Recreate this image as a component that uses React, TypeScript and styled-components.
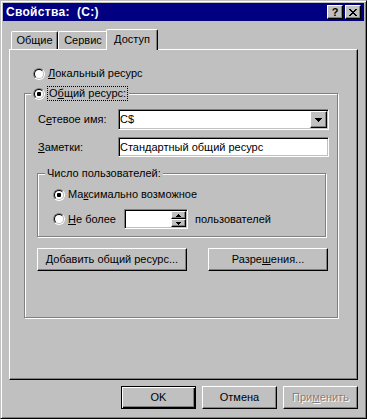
import styled, { createGlobalStyle, css } from "styled-components";

const GlobalStyle = createGlobalStyle`
  html, body {
    margin: 0;
    padding: 0;
    background: #c0c0c0;
  }
  body {
    font-family: "Liberation Sans", Arial, sans-serif;
    font-size: 11px;
    color: #000;
  }
  u {
    text-underline-offset: 1px;
  }
`;

const raised = css`
  border: 1px solid;
  border-color: #fff #000 #000 #fff;
  box-shadow: inset -1px -1px #808080;
`;

const sunken = css`
  border: 1px solid;
  border-color: #808080 #fff #fff #808080;
  box-shadow: inset 1px 1px #000, inset -1px -1px #c0c0c0;
`;

const etched = css`
  border: 1px solid #808080;
  box-shadow: inset 1px 1px #fff, 1px 1px #fff;
`;

const Window = styled.div`
  box-sizing: border-box;
  width: 367px;
  height: 419px;
  background: #c0c0c0;
  border: 1px solid;
  border-color: #c0c0c0 #000 #000 #c0c0c0;
  box-shadow: inset 1px 1px #fff, inset -1px -1px #808080;
  padding: 2px;
  display: flex;
  flex-direction: column;
`;

const TitleBar = styled.div`
  height: 18px;
  background: #000080;
  display: flex;
  align-items: center;
  gap: 2px;
  padding: 0 3px 0 3px;
`;

const TitleText = styled.div`
  flex: 1;
  color: #fff;
  font-weight: bold;
  font-size: 12px;
  letter-spacing: 0.3px;
  white-space: pre;
  line-height: 14px;
`;

const CaptionButton = styled.div`
  box-sizing: border-box;
  width: 16px;
  height: 14px;
  background: #c0c0c0;
  ${raised}
  display: flex;
  align-items: center;
  justify-content: center;
  font-weight: bold;
  font-size: 11px;
  line-height: 11px;
`;

const Client = styled.div`
  flex: 1;
  display: flex;
  flex-direction: column;
  padding: 8px 6px 0 6px;
`;

const TabRow = styled.div`
  display: flex;
  align-items: flex-end;
  height: 20px;
  padding-left: 2px;
`;

const Tab = styled.div<{ $w: number; $active?: boolean }>`
  box-sizing: border-box;
  width: ${(p) => p.$w}px;
  height: ${(p) => (p.$active ? 21 : 18)}px;
  background: #c0c0c0;
  border: 1px solid;
  border-color: #fff #000 transparent #fff;
  border-bottom: none;
  border-radius: 2px 2px 0 0;
  box-shadow: inset -1px 0 #808080;
  text-align: center;
  line-height: 13px;
  padding-top: ${(p) => (p.$active ? 3 : 2)}px;
  ${(p) =>
    p.$active &&
    css`
      margin: 0 -2px -1px -2px;
      position: relative;
      z-index: 1;
    `}
`;

const Panel = styled.div`
  box-sizing: border-box;
  width: 349px;
  height: 331px;
  ${raised}
  padding: 17px 0 0 14px;
`;

const OptionRow = styled.div<{ $indent?: number }>`
  display: flex;
  align-items: center;
  height: 13px;
  gap: 3px;
  margin-left: ${(p) => p.$indent ?? 0}px;
`;

const Radio = styled.span<{ $checked?: boolean }>`
  position: relative;
  flex: none;
  box-sizing: border-box;
  width: 12px;
  height: 12px;
  border-radius: 50%;
  border: 1px solid;
  border-color: #808080 #fff #fff #808080;
  &::before {
    content: "";
    position: absolute;
    inset: 0;
    box-sizing: border-box;
    border-radius: 50%;
    border: 1px solid;
    border-color: #000 #c0c0c0 #c0c0c0 #000;
    background: #fff;
  }
  &::after {
    content: "";
    display: ${(p) => (p.$checked ? "block" : "none")};
    position: absolute;
    left: 3px;
    top: 3px;
    width: 4px;
    height: 4px;
    border-radius: 1px;
    background: #000;
  }
`;

const OptionLabel = styled.span<{ $w?: number }>`
  line-height: 13px;
  white-space: nowrap;
  ${(p) => p.$w && `width: ${p.$w}px;`}
`;

const Group = styled.div<{ $w: number; $h: number }>`
  position: relative;
  box-sizing: border-box;
  width: ${(p) => p.$w}px;
  height: ${(p) => p.$h}px;
  ${etched}
`;

const ShareGroup = styled(Group)`
  margin-top: 13px;
  padding: 15px 0 0 12px;
`;

const UsersGroup = styled(Group)`
  margin-top: 16px;
  padding: 14px 0 0 15px;
`;

const GroupLegend = styled.div<{ $left: number; $top: number }>`
  position: absolute;
  left: ${(p) => p.$left}px;
  top: ${(p) => p.$top}px;
  display: flex;
  align-items: center;
  height: 15px;
  padding: 0 2px;
  background: #c0c0c0;
  line-height: 13px;
  white-space: nowrap;
`;

const FocusLabel = styled.span`
  margin-left: 3px;
  padding: 0 1px;
  outline: 1px dotted #000;
`;

const FieldRow = styled.div<{ $gap?: number }>`
  display: flex;
  align-items: center;
  margin-top: ${(p) => p.$gap ?? 0}px;
`;

const FieldLabel = styled.span`
  width: 81px;
  padding-left: 1px;
  box-sizing: border-box;
  line-height: 13px;
  white-space: nowrap;
`;

const Field = styled.div<{ $w: number; $h: number }>`
  box-sizing: border-box;
  width: ${(p) => p.$w}px;
  height: ${(p) => p.$h}px;
  background: #fff;
  ${sunken}
  padding: 1px;
  display: flex;
  align-items: stretch;
`;

const FieldText = styled.span`
  flex: 1;
  display: flex;
  align-items: center;
  line-height: 13px;
  white-space: nowrap;
  overflow: hidden;
`;

const DropButton = styled.div`
  box-sizing: border-box;
  width: 17px;
  background: #c0c0c0;
  ${raised}
  display: flex;
  align-items: center;
  justify-content: center;
`;

const SpinColumn = styled.div`
  display: flex;
  flex-direction: column;
  width: 15px;
`;

const SpinButton = styled.div`
  box-sizing: border-box;
  height: 8px;
  background: #c0c0c0;
  ${raised}
  display: flex;
  align-items: center;
  justify-content: center;
`;

const LimitRow = styled.div`
  display: flex;
  align-items: center;
  height: 20px;
  margin-top: 8px;
  gap: 3px;
`;

const AfterLabel = styled.span`
  margin-left: 4px;
  line-height: 13px;
`;

const ActionRow = styled.div`
  display: flex;
  gap: 21px;
  margin-top: 11px;
`;

const PushButton = styled.div<{ $w: number; $default?: boolean; $disabled?: boolean }>`
  box-sizing: border-box;
  width: ${(p) => p.$w}px;
  height: 23px;
  background: #c0c0c0;
  ${(p) =>
    p.$default
      ? css`
          border: 1px solid #000;
          box-shadow: inset 1px 1px #fff, inset -1px -1px #000, inset -2px -2px #808080;
        `
      : raised}
  display: flex;
  align-items: center;
  justify-content: center;
  line-height: 13px;
  white-space: nowrap;
  ${(p) =>
    p.$disabled &&
    css`
      color: #808080;
      text-shadow: 1px 1px #fff;
    `}
`;

const Footer = styled.div`
  display: flex;
  justify-content: flex-end;
  gap: 6px;
  margin-top: 6px;
`;

const CloseGlyph = () => (
  <svg width="8" height="7" viewBox="0 0 8 7" shapeRendering="crispEdges">
    <path
      fill="#000"
      d="M0 0h2v1H0zM6 0h2v1H6zM1 1h2v1H1zM5 1h2v1H5zM2 2h4v1H2zM3 3h2v1H3zM2 4h4v1H2zM1 5h2v1H1zM5 5h2v1H5zM0 6h2v1H0zM6 6h2v1H6z"
    />
  </svg>
);

const DownArrow = ({ w, h }: { w: number; h: number }) => (
  <svg width={w} height={h} viewBox={`0 0 ${w} ${h}`} shapeRendering="crispEdges">
    <polygon fill="#000" points={`0,0 ${w},0 ${w / 2},${h}`} />
  </svg>
);

const UpArrow = ({ w, h }: { w: number; h: number }) => (
  <svg width={w} height={h} viewBox={`0 0 ${w} ${h}`} shapeRendering="crispEdges">
    <polygon fill="#000" points={`0,${h} ${w},${h} ${w / 2},0`} />
  </svg>
);

export default function App() {
  return (
    <>
      <GlobalStyle />
      <Window>
        <TitleBar>
          <TitleText>Свойства:  (C:)</TitleText>
          <CaptionButton>?</CaptionButton>
          <CaptionButton>
            <CloseGlyph />
          </CaptionButton>
        </TitleBar>
        <Client>
          <TabRow>
            <Tab $w={47}>Общие</Tab>
            <Tab $w={50}>Сервис</Tab>
            <Tab $w={52} $active>
              Доступ
            </Tab>
          </TabRow>
          <Panel>
            <OptionRow $indent={9}>
              <Radio />
              <OptionLabel>
                <u>Л</u>окальный ресурс
              </OptionLabel>
            </OptionRow>
            <ShareGroup $w={314} $h={225}>
              <GroupLegend $left={6} $top={-8}>
                <Radio $checked />
                <FocusLabel>
                  О<u>б</u>щий ресурс:
                </FocusLabel>
              </GroupLegend>
              <FieldRow>
                <FieldLabel>
                  С<u>е</u>тевое имя:
                </FieldLabel>
                <Field $w={211} $h={21}>
                  <FieldText>C$</FieldText>
                  <DropButton>
                    <DownArrow w={7} h={4} />
                  </DropButton>
                </Field>
              </FieldRow>
              <FieldRow $gap={7}>
                <FieldLabel>
                  <u>З</u>аметки:
                </FieldLabel>
                <Field $w={211} $h={20}>
                  <FieldText>Стандартный общий ресурс</FieldText>
                </Field>
              </FieldRow>
              <UsersGroup $w={289} $h={64}>
                <GroupLegend $left={7} $top={-8}>
                  Число пользователей:
                </GroupLegend>
                <OptionRow>
                  <Radio $checked />
                  <OptionLabel>
                    Ма<u>к</u>симально возможное
                  </OptionLabel>
                </OptionRow>
                <LimitRow>
                  <Radio />
                  <OptionLabel $w={53}>
                    <u>Н</u>е более
                  </OptionLabel>
                  <Field $w={64} $h={20}>
                    <FieldText />
                    <SpinColumn>
                      <SpinButton>
                        <UpArrow w={5} h={3} />
                      </SpinButton>
                      <SpinButton>
                        <DownArrow w={5} h={3} />
                      </SpinButton>
                    </SpinColumn>
                  </Field>
                  <AfterLabel>пользователей</AfterLabel>
                </LimitRow>
              </UsersGroup>
              <ActionRow>
                <PushButton $w={150}>
                  <u>Д</u>обавить общий ресурс...
                </PushButton>
                <PushButton $w={120}>
                  Разре<u>ш</u>ения...
                </PushButton>
              </ActionRow>
            </ShareGroup>
          </Panel>
          <Footer>
            <PushButton $w={75} $default>
              OK
            </PushButton>
            <PushButton $w={75}>Отмена</PushButton>
            <PushButton $w={75} $disabled>
              При<u>м</u>енить
            </PushButton>
          </Footer>
        </Client>
      </Window>
    </>
  );
}
